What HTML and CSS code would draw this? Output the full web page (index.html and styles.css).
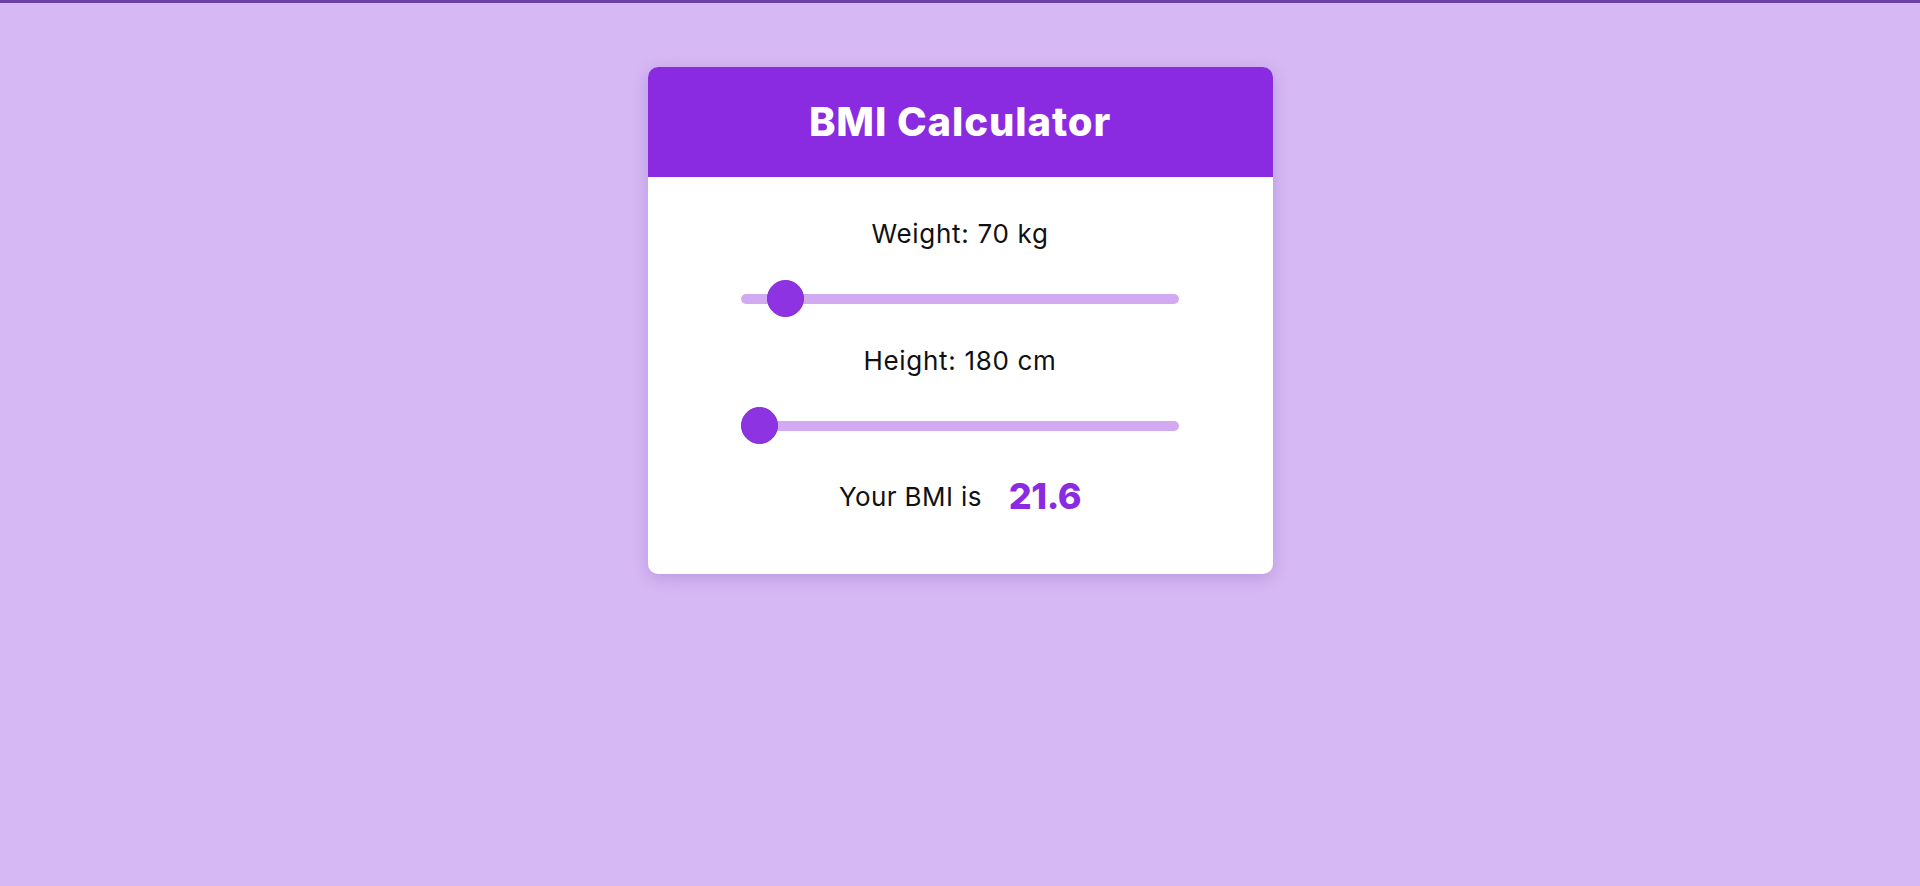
FILE: index.html
```html
<!DOCTYPE html>
<html lang="en">
<head>
<meta charset="utf-8">
<title>BMI Calculator</title>
<link rel="stylesheet" href="styles.css">
</head>
<body>
<div class="topbar"></div>
<main class="page">
  <section class="card">
    <header class="card-header">
      <h1 class="title">BMI Calculator</h1>
    </header>
    <div class="card-body">
      <p class="label label-weight">Weight: 70 kg</p>
      <input class="slider slider-weight" type="range" min="40" max="500" value="70">
      <p class="label label-height">Height: 180 cm</p>
      <input class="slider slider-height" type="range" min="180" max="250" value="180">
      <div class="result">
        <span class="result-text">Your BMI is</span>
        <span class="result-value">21.6</span>
      </div>
    </div>
  </section>
</main>
</body>
</html>
```

FILE: styles.css
```css
html, body {
  margin: 0;
  padding: 0;
}
body {
  background: #d6b8f4;
  font-family: "Inter", "Noto Sans", "Liberation Sans", sans-serif;
  color: #111;
  min-height: 886px;
}
.topbar {
  height: 3px;
  background: #6c42a4;
}
.page {
  display: flex;
  justify-content: center;
  padding-top: 64px;
}
.card {
  width: 625px;
  background: #fff;
  border-radius: 10px;
  overflow: hidden;
  box-shadow: 0 4px 16px rgba(90, 40, 140, 0.22);
}
.card-header {
  background: #8a2be2;
  height: 110px;
  display: flex;
  align-items: center;
  justify-content: center;
}
.title {
  margin: 0;
  color: #fff;
  font-size: 40px;
  font-weight: 800;
  letter-spacing: 0.9px;
  line-height: 1;
}
.card-body {
  display: flex;
  flex-direction: column;
  align-items: center;
  padding: 39px 0 53px;
}
.label {
  margin: 0;
  font-size: 26px;
  line-height: 36px;
  font-weight: 400;
  letter-spacing: 0.7px;
  color: #111;
}
.label-height {
  margin-top: 26px;
}
.slider {
  -webkit-appearance: none;
  appearance: none;
  width: 438px;
  height: 37px;
  margin: 28px 0 0;
  background: transparent;
  padding: 0;
}
.slider::-webkit-slider-runnable-track {
  height: 10px;
  border-radius: 5px;
  background: #d2aaf2;
}
.slider::-webkit-slider-thumb {
  -webkit-appearance: none;
  appearance: none;
  width: 37px;
  height: 37px;
  border-radius: 50%;
  background: #8e33e2;
  border: 1px solid #8428d8;
  box-sizing: border-box;
  margin-top: -13.5px;
}
.slider::-moz-range-track {
  height: 10px;
  border-radius: 5px;
  background: #d2aaf2;
}
.slider::-moz-range-thumb {
  width: 37px;
  height: 37px;
  border-radius: 50%;
  background: #8e33e2;
  border: 1px solid #8428d8;
}
.result {
  margin-top: 27px;
  display: flex;
  align-items: center;
  gap: 27px;
  height: 50px;
}
.result-text {
  font-size: 26px;
  letter-spacing: 0.4px;
  color: #111;
}
.result-value {
  font-size: 36px;
  font-weight: 800;
  color: #8a2be2;
  letter-spacing: -0.5px;
}
```
